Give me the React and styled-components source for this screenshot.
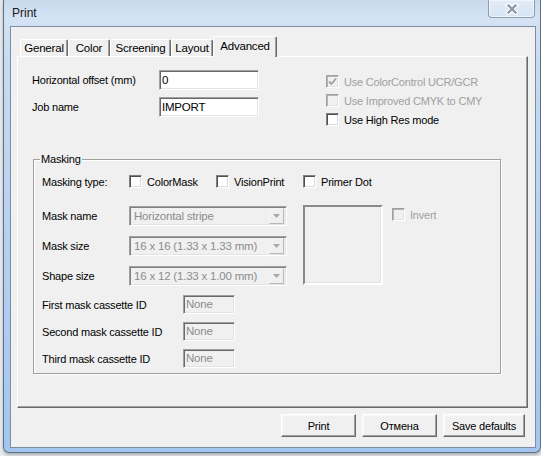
import styled, { createGlobalStyle } from 'styled-components';

const GlobalStyle = createGlobalStyle`
  html, body {
    margin: 0;
    padding: 0;
  }
  body {
    background: #e4e8ed;
    font-family: "Liberation Sans", Arial, sans-serif;
  }
`;

const tabs = [
  { label: 'General', w: 48 },
  { label: 'Color', w: 42 },
  { label: 'Screening', w: 61 },
  { label: 'Layout', w: 42 },
  { label: 'Advanced', w: 64, active: true },
];

const CheckMark = () => (
  <svg width="9" height="9" viewBox="0 0 9 9">
    <path d="M1 4.5 L3.5 7 L8 1.5" fill="none" stroke="#a0a0a0" strokeWidth="1.8" />
  </svg>
);

const Check = ({ label, checked, disabled }) => (
  <CheckItem $disabled={disabled}>
    <CheckBox $disabled={disabled}>{checked && <CheckMark />}</CheckBox>
    <span>{label}</span>
  </CheckItem>
);

const Combo = ({ value }) => (
  <ComboBox>
    <ComboText>{value}</ComboText>
    <DropBtn>
      <svg width="7" height="4" viewBox="0 0 7 4">
        <path d="M0 0 H7 L3.5 4 Z" fill="#a8a8a8" />
      </svg>
    </DropBtn>
  </ComboBox>
);

export default function App() {
  return (
    <Desktop>
      <GlobalStyle />
      <Window>
        <TitleBar>
          <TitleText>Print</TitleText>
          <CloseButton>
            <svg width="14" height="12" viewBox="0 0 14 12">
              <path d="M3.5 2.5 L10.5 9.5 M10.5 2.5 L3.5 9.5" stroke="#ffffff" strokeWidth="4.4" strokeLinecap="square" />
              <path d="M3.5 2.5 L10.5 9.5 M10.5 2.5 L3.5 9.5" stroke="#8a939f" strokeWidth="2.2" strokeLinecap="square" />
            </svg>
          </CloseButton>
        </TitleBar>

        <Client>
          <TabArea>
            <TabStrip>
              {tabs.map((t) => (
                <Tab key={t.label} $w={t.w} $active={t.active}>{t.label}</Tab>
              ))}
            </TabStrip>

            <Panel>
              <TopSection>
                <FieldColumn>
                  <FieldRow>
                    <Label $w={127}>Horizontal offset (mm)</Label>
                    <TextField $w={100}>0</TextField>
                  </FieldRow>
                  <FieldRow>
                    <Label $w={127}>Job name</Label>
                    <TextField $w={100}>IMPORT</TextField>
                  </FieldRow>
                </FieldColumn>
                <CheckColumn>
                  <Check label="Use ColorControl UCR/GCR" checked disabled />
                  <Check label="Use Improved CMYK to CMY" disabled />
                  <Check label="Use High Res mode" />
                </CheckColumn>
              </TopSection>

              <Group>
                <Legend>Masking</Legend>
                <TypeRow>
                  <Label>Masking type:</Label>
                  <Check label="ColorMask" />
                  <Check label="VisionPrint" />
                  <Check label="Primer Dot" />
                </TypeRow>

                <MaskBlock>
                  <ComboColumn>
                    <FieldRow>
                      <Label $w={87}>Mask name</Label>
                      <Combo value="Horizontal stripe" />
                    </FieldRow>
                    <FieldRow>
                      <Label $w={87}>Mask size</Label>
                      <Combo value="16 x 16 (1.33 x 1.33 mm)" />
                    </FieldRow>
                    <FieldRow>
                      <Label $w={87}>Shape size</Label>
                      <Combo value="16 x 12 (1.33 x 1.00 mm)" />
                    </FieldRow>
                  </ComboColumn>
                  <Preview />
                  <InvertWrap>
                    <Check label="Invert" disabled />
                  </InvertWrap>
                </MaskBlock>

                <CassetteList>
                  <CassetteRow>
                    <Label $w={141}>First mask cassette ID</Label>
                    <TextField $w={52} $h={19} $disabled>None</TextField>
                  </CassetteRow>
                  <CassetteRow>
                    <Label $w={141}>Second mask cassette ID</Label>
                    <TextField $w={52} $h={19} $disabled>None</TextField>
                  </CassetteRow>
                  <CassetteRow>
                    <Label $w={141}>Third mask cassette ID</Label>
                    <TextField $w={52} $h={19} $disabled>None</TextField>
                  </CassetteRow>
                </CassetteList>
              </Group>
            </Panel>
          </TabArea>

          <ButtonRow>
            <Button $w={75}>Print</Button>
            <Button $w={75}>Отмена</Button>
            <Button $w={82}>Save defaults</Button>
          </ButtonRow>
        </Client>
      </Window>
    </Desktop>
  );
}

const Desktop = styled.div`
  width: 541px;
  height: 456px;
  overflow: hidden;
  background: #e6eaef;
`;

const Window = styled.div`
  box-sizing: border-box;
  margin-left: 3px;
  width: 538px;
  height: 453px;
  display: flex;
  flex-direction: column;
  border: 1px solid #5e6f84;
  border-top: none;
  border-radius: 0 0 6px 6px;
  background: linear-gradient(180deg, #c9d9ec 0%, #d4e3f4 4%, #c9dcf1 12%, #b9d3ef 45%, #a2c6ee 100%);
  box-shadow: 0 2px 3px rgba(0, 0, 0, 0.25);
`;

const TitleBar = styled.div`
  height: 26px;
  flex-shrink: 0;
  display: flex;
  align-items: flex-start;
  padding-left: 8px;
`;

const TitleText = styled.div`
  font-size: 12px;
  line-height: 26px;
  color: #1a1a1a;
`;

const CloseButton = styled.div`
  box-sizing: border-box;
  margin-left: auto;
  margin-right: 5px;
  width: 47px;
  height: 18px;
  display: flex;
  align-items: center;
  justify-content: center;
  border: 1px solid rgba(60, 80, 110, 0.5);
  border-top: none;
  border-radius: 0 0 4px 4px;
  background: linear-gradient(180deg, rgba(255, 255, 255, 0.5), rgba(255, 255, 255, 0.15));
  box-shadow: inset 0 0 0 1px rgba(255, 255, 255, 0.5);
`;

const Client = styled.div`
  flex: 1;
  display: flex;
  flex-direction: column;
  margin: 0 4px 4px 6px;
  border: 1px solid #7b8ea6;
  background: #f0f0f0;
  font-size: 11px;
  letter-spacing: -0.2px;
  color: #000;
`;

const TabArea = styled.div`
  display: flex;
  flex-direction: column;
  padding: 0 7px 0 6px;
`;

const TabStrip = styled.div`
  height: 29px;
  display: flex;
  align-items: flex-end;
  padding-left: 3px;
`;

const Tab = styled.div`
  box-sizing: border-box;
  position: relative;
  width: ${(p) => p.$w}px;
  height: ${(p) => (p.$active ? 21 : 17)}px;
  margin-bottom: ${(p) => (p.$active ? -1 : 0)}px;
  z-index: ${(p) => (p.$active ? 1 : 0)};
  border-top: 1px solid #ffffff;
  border-left: 1px solid #ffffff;
  border-right: 1px solid #696969;
  box-shadow: inset -1px 0 0 #a0a0a0;
  border-radius: 2px 2px 0 0;
  background: #f0f0f0;
  text-align: center;
  font-size: 11.5px;
  line-height: ${(p) => (p.$active ? 18 : 16)}px;
  white-space: nowrap;
`;

const Panel = styled.div`
  box-sizing: border-box;
  height: 352px;
  padding: 13px 14px;
  border: 1px solid;
  border-color: #ffffff #696969 #696969 #ffffff;
  box-shadow: inset -1px -1px 0 #a0a0a0;
  display: flex;
  flex-direction: column;
`;

const TopSection = styled.div`
  display: flex;
  height: 57px;
`;

const FieldColumn = styled.div`
  width: 294px;
  display: flex;
  flex-direction: column;
  gap: 7px;
`;

const FieldRow = styled.div`
  display: flex;
  align-items: center;
  height: 20px;
`;

const Label = styled.div`
  width: ${(p) => (p.$w ? `${p.$w}px` : 'auto')};
  flex-shrink: 0;
  white-space: nowrap;
`;

const TextField = styled.div`
  box-sizing: border-box;
  width: ${(p) => p.$w}px;
  height: ${(p) => p.$h || 20}px;
  padding-left: 2px;
  border: 1px solid;
  border-color: #a0a0a0 #ffffff #ffffff #a0a0a0;
  box-shadow: inset 1px 1px 0 #696969, inset -1px -1px 0 #e3e3e3;
  background: ${(p) => (p.$disabled ? '#f0f0f0' : '#ffffff')};
  color: ${(p) => (p.$disabled ? '#8c8c8c' : '#000')};
  line-height: ${(p) => (p.$h || 20) - 2}px;
  font-size: 11.5px;
`;

const CheckColumn = styled.div`
  display: flex;
  flex-direction: column;
  gap: 6px;
  padding-top: 5px;
`;

const CheckItem = styled.div`
  display: flex;
  align-items: center;
  gap: 5px;
  height: 13px;
  white-space: nowrap;
  color: ${(p) => (p.$disabled ? '#a0a0a0' : '#000')};
`;

const CheckBox = styled.div`
  box-sizing: border-box;
  width: 13px;
  height: 13px;
  flex-shrink: 0;
  display: flex;
  align-items: center;
  justify-content: center;
  border: 1px solid;
  border-color: ${(p) => (p.$disabled ? '#a0a0a0 #ffffff #ffffff #a0a0a0' : '#808080 #ffffff #ffffff #808080')};
  box-shadow: ${(p) =>
    p.$disabled
      ? 'inset 1px 1px 0 #b4b4b4, inset -1px -1px 0 #e3e3e3'
      : 'inset 1px 1px 0 #505050, inset -1px -1px 0 #dcdcdc'};
  background: ${(p) => (p.$disabled ? '#f0f0f0' : '#ffffff')};
`;

const Group = styled.fieldset`
  box-sizing: border-box;
  width: 468px;
  margin: 26px 0 0 1px;
  padding: 0 8px 5px 8px;
  border: 1px solid #a0a0a0;
  box-shadow: inset 1px 1px 0 #ffffff, 1px 1px 0 #ffffff;
  min-width: 0;
`;

const Legend = styled.legend`
  padding: 0 1px;
  margin-left: -2px;
  line-height: 12px;
  background: #f0f0f0;
`;

const TypeRow = styled.div`
  display: grid;
  grid-template-columns: 87px 87px 87px auto;
  align-items: center;
  height: 13px;
  margin-top: 10px;
`;

const MaskBlock = styled.div`
  display: flex;
  align-items: flex-start;
  margin-top: 17px;
`;

const ComboColumn = styled.div`
  display: flex;
  flex-direction: column;
  gap: 10px;
  margin-top: 1px;
`;

const ComboBox = styled.div`
  box-sizing: border-box;
  width: 158px;
  height: 20px;
  display: flex;
  align-items: center;
  border: 1px solid;
  border-color: #a0a0a0 #ffffff #ffffff #a0a0a0;
  box-shadow: inset 1px 1px 0 #808080, inset -1px -1px 0 #e3e3e3;
  background: #f0f0f0;
  padding: 1px 2px 1px 1px;
`;

const ComboText = styled.div`
  flex: 1;
  padding-left: 3px;
  color: #8c8c8c;
  font-size: 11.5px;
  white-space: nowrap;
  overflow: hidden;
`;

const DropBtn = styled.div`
  box-sizing: border-box;
  width: 15px;
  height: 16px;
  display: flex;
  align-items: center;
  justify-content: center;
  border: 1px solid;
  border-color: #f4f4f4 #b8b8b8 #b8b8b8 #f4f4f4;
  background: #f0f0f0;
`;

const Preview = styled.div`
  box-sizing: border-box;
  width: 80px;
  height: 80px;
  margin-left: 16px;
  border: 2px solid;
  border-color: #8a8a8a #ffffff #ffffff #8a8a8a;
  box-shadow: inset -1px -1px 0 #e3e3e3;
  background: #f0f0f0;
`;

const InvertWrap = styled.div`
  margin: 3px 0 0 9px;
`;

const CassetteList = styled.div`
  display: flex;
  flex-direction: column;
  gap: 8px;
  margin-top: 9px;
`;

const CassetteRow = styled.div`
  display: flex;
  align-items: center;
  height: 19px;
`;

const ButtonRow = styled.div`
  display: flex;
  justify-content: flex-end;
  gap: 6px;
  margin-top: 6px;
  padding-right: 10px;
`;

const Button = styled.div`
  box-sizing: border-box;
  width: ${(p) => p.$w}px;
  height: 23px;
  display: flex;
  align-items: center;
  justify-content: center;
  border: 1px solid;
  border-color: #ffffff #696969 #696969 #ffffff;
  box-shadow: inset -1px -1px 0 #a0a0a0, inset 1px 1px 0 #f8f8f8;
  background: #f0f0f0;
  white-space: nowrap;
`;
